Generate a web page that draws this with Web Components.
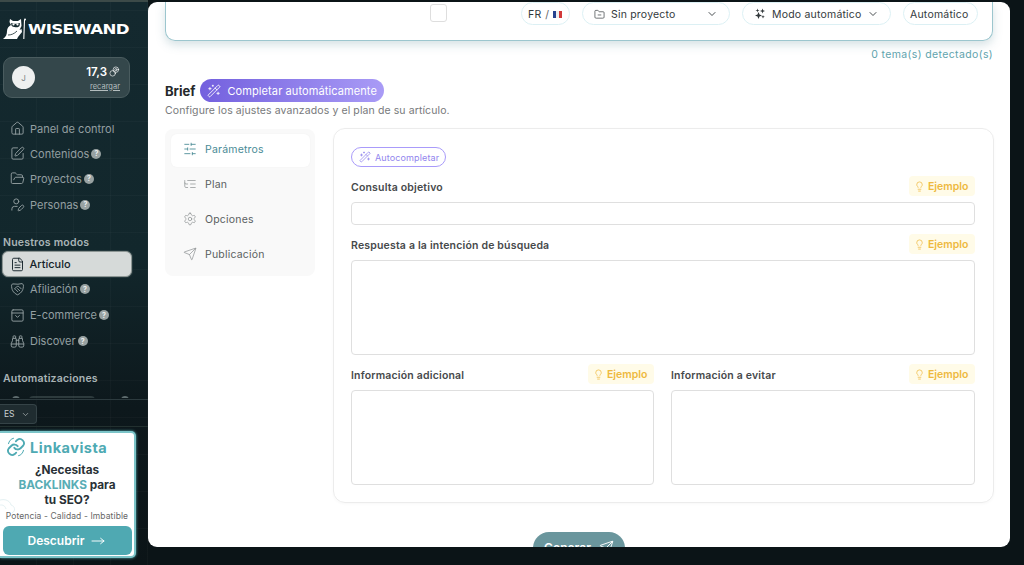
<!DOCTYPE html>
<html lang="es">
<head>
<meta charset="utf-8">
<title>Wisewand</title>
<style>
  html, body { margin: 0; height: 100%; overflow: hidden; background: #0b1417; }
  body { font-family: Inter, "Liberation Sans", sans-serif; }
  #app { display: flex; height: 565px; }
</style>
</head>
<body>
<div id="app">
  <wise-sidebar></wise-sidebar>
  <wise-main></wise-main>
</div>
<script>
const ICONS = {
  house: '<path d="M15 21v-8a1 1 0 0 0-1-1h-4a1 1 0 0 0-1 1v8"/><path d="M3 10a2 2 0 0 1 .709-1.528l7-5.999a2 2 0 0 1 2.582 0l7 5.999A2 2 0 0 1 21 10v9a2 2 0 0 1-2 2H5a2 2 0 0 1-2-2z"/>',
  pen: '<path d="M12 3H5a2 2 0 0 0-2 2v14a2 2 0 0 0 2 2h14a2 2 0 0 0 2-2v-7"/><path d="M18.375 2.625a1 1 0 0 1 3 3l-9.013 9.014a2 2 0 0 1-.853.505l-2.873.84a.5.5 0 0 1-.62-.62l.84-2.873a2 2 0 0 1 .506-.852z"/>',
  folderOpen: '<path d="m6 14 1.5-2.9A2 2 0 0 1 9.24 10H20a2 2 0 0 1 1.94 2.5l-1.54 6a2 2 0 0 1-1.95 1.5H4a2 2 0 0 1-2-2V5a2 2 0 0 1 2-2h3.9a2 2 0 0 1 1.69.9l.81 1.2a2 2 0 0 0 1.67.9H18a2 2 0 0 1 2 2v2"/>',
  userPen: '<path d="M11.5 15H7a4 4 0 0 0-4 4v2"/><path d="M21.378 16.626a1 1 0 0 0-3.004-3.004l-4.01 4.012a2 2 0 0 0-.506.854l-.837 2.87a.5.5 0 0 0 .62.62l2.87-.837a2 2 0 0 0 .854-.506z"/><circle cx="10" cy="7" r="4"/>',
  file: '<path d="M15 2H6a2 2 0 0 0-2 2v16a2 2 0 0 0 2 2h12a2 2 0 0 0 2-2V7Z"/><path d="M14 2v4a2 2 0 0 0 2 2h4"/><path d="M10 9H8"/><path d="M16 13H8"/><path d="M16 17H8"/>',
  shake: '<path d="M12 3.5 4 3 2.5 5c0 7 2 12 9.5 15.5C19.500 17 21.500 12 21.500 5L20 3z"/><path d="m7 11 4-3.500c1-.8 2.500-.8 3.500 0L18 11"/><path d="m9 12 3.500 3.500M12 10.500l3.500 3.500"/>',
  bag: '<path d="M5 3h14a2 2 0 0 1 2 2v14a2 2 0 0 1-2 2H5a2 2 0 0 1-2-2V5a2 2 0 0 1 2-2z"/><path d="M3 8h18"/><path d="m9 12 3 3 3-3"/>',
  binoculars: '<path d="M10 10h4"/><path d="M19 7V4a1 1 0 0 0-1-1h-2a1 1 0 0 0-1 1v3"/><path d="M20 21a2 2 0 0 0 2-2v-3.851c0-1.39-2-2.962-2-4.829V8a1 1 0 0 0-1-1h-4a1 1 0 0 0-1 1v11a2 2 0 0 0 2 2z"/><path d="M22 16H2"/><path d="M4 21a2 2 0 0 1-2-2v-3.851c0-1.39 2-2.962 2-4.829V8a1 1 0 0 1 1-1h4a1 1 0 0 1 1 1v11a2 2 0 0 1-2 2z"/><path d="M9 7V4a1 1 0 0 0-1-1H6a1 1 0 0 0-1 1v3"/>',
  sliders: '<path d="M21 4h-7M10 4H3M21 12h-9M8 12H3M21 20h-5M12 20H3M14 2v4M8 10v4M16 18v4"/>',
  tree: '<path d="M21 12h-8M21 6H8M21 18h-8M3 6v4c0 1.100.9 2 2 2h3M3 10v6c0 1.100.9 2 2 2h3"/>',
  gear: '<path d="M12.220 2h-.44a2 2 0 0 0-2 2v.18a2 2 0 0 1-1 1.730l-.43.25a2 2 0 0 1-2 0l-.15-.08a2 2 0 0 0-2.730.73l-.22.38a2 2 0 0 0 .73 2.730l.15.1a2 2 0 0 1 1 1.720v.51a2 2 0 0 1-1 1.740l-.15.09a2 2 0 0 0-.73 2.730l.22.38a2 2 0 0 0 2.730.73l.15-.08a2 2 0 0 1 2 0l.43.25a2 2 0 0 1 1 1.730V20a2 2 0 0 0 2 2h.44a2 2 0 0 0 2-2v-.18a2 2 0 0 1 1-1.730l.43-.25a2 2 0 0 1 2 0l.15.08a2 2 0 0 0 2.730-.73l.22-.39a2 2 0 0 0-.73-2.730l-.15-.08a2 2 0 0 1-1-1.740v-.5a2 2 0 0 1 1-1.740l.15-.09a2 2 0 0 0 .73-2.730l-.22-.38a2 2 0 0 0-2.730-.73l-.15.08a2 2 0 0 1-2 0l-.43-.25a2 2 0 0 1-1-1.730V4a2 2 0 0 0-2-2z"/><circle cx="12" cy="12" r="3"/>',
  send: '<path d="M14.536 21.686a.5.5 0 0 0 .937-.024l6.500-19a.496.496 0 0 0-.635-.635l-19 6.500a.5.5 0 0 0-.024.937l7.930 3.180a2 2 0 0 1 1.112 1.110z"/><path d="m21.854 2.147-10.940 10.939"/>',
  wand: '<path d="m21.640 3.640-1.280-1.280a1.210 1.210 0 0 0-1.720 0L2.360 18.640a1.210 1.210 0 0 0 0 1.720l1.280 1.280a1.200 1.200 0 0 0 1.720 0L21.640 5.360a1.200 1.200 0 0 0 0-1.720"/><path d="m14 7 3 3"/><path d="M5 6v4M19 14v4M10 2v2M7 8H3M21 16h-4M11 3H9"/>',
  bulb: '<path d="M15 14c.2-1 .7-1.700 1.500-2.500 1-.9 1.500-2.200 1.500-3.500A6 6 0 0 0 6 8c0 1 .2 2.200 1.500 3.500.7.7 1.300 1.500 1.500 2.500"/><path d="M9 18h6"/><path d="M10 22h4"/>',
  coins: '<circle cx="8" cy="16" r="6"/><circle cx="15" cy="8" r="6"/><circle cx="15" cy="8" r="2.500"/>',
  chevron: '<path d="m6 9 6 6 6-6"/>',
  folder: '<path d="M20 20a2 2 0 0 0 2-2V8a2 2 0 0 0-2-2h-7.900a2 2 0 0 1-1.690-.9L9.600 3.900A2 2 0 0 0 7.930 3H4a2 2 0 0 0-2 2v13a2 2 0 0 0 2 2Z"/><path d="M9 13h6"/>',
  sparks: '<path fill="currentColor" stroke="none" d="M9 8l2 5 5 2-5 2-2 5-2-5-5-2 5-2zM17 1l1.300 3.700L22 6l-3.700 1.300L17 11l-1.300-3.700L12 6l3.700-1.300zM18 14l1 2.500 2.500 1-2.500 1-1 2.500-1-2.500-2.500-1 2.500-1zM7 1l1 3 3 1-3 1-1 3-1-3-3-1 3-1z"/>',
  arrow: '<path d="M3 12h18"/><path d="m16 8 5 4-5 4"/>'
};

// every icon is a stroked 24x24 svg, size and colour come from the user of the tag
class WiseIcon extends HTMLElement {
  connectedCallback() {
    const size = this.getAttribute('size') || 16;
    const sw = this.getAttribute('sw') || 1.6;
    this.attachShadow({ mode: 'open' }).innerHTML = `
      <style>:host { display: inline-flex; flex: none; } svg { display: block; }</style>
      <svg width="${size}" height="${size}" viewBox="0 0 24 24" fill="none" stroke="currentColor" stroke-width="${sw}" stroke-linecap="round" stroke-linejoin="round">${ICONS[this.getAttribute('name')] || ''}</svg>`;
  }
}
customElements.define('wise-icon', WiseIcon);

class NavItem extends HTMLElement {
  connectedCallback() {
    const help = this.hasAttribute('help') ? '<span class="help">?</span>' : '';
    this.attachShadow({ mode: 'open' }).innerHTML = `
      <style>
        :host { display: flex; align-items: center; height: var(--h, 25px); margin: 0 0 0 2px; width: 130px; box-sizing: border-box; padding-left: 8px; gap: 5px; font-size: 11px; color: #939fa1; white-space: nowrap; }
        :host([active]) { background: #d6dad9; color: #14232a; border: 1.5px solid #8d9694; border-radius: 6px; padding-left: 6.500px; height: 26px; font-weight: 500; box-shadow: 0 0 0 1px #24383c; }
        .help { width: 10px; height: 10px; border-radius: 50%; background: #98a2a2; color: #eef0f0; font-size: 7px; font-weight: 700; display: flex; align-items: center; justify-content: center; margin-left: -3px; }
      </style>
      <wise-icon name="${this.getAttribute('icon')}" size="15" sw="1.500"></wise-icon><span><slot></slot></span>${help}`;
  }
}
customElements.define('nav-item', NavItem);

class WiseLogo extends HTMLElement {
  constructor() {
    super();
    this.attachShadow({ mode: 'open' }).innerHTML = `
      <style>
        :host { display: flex; align-items: center; height: 24px; padding-left: 2px; }
        span { color: #fff; font: 700 13.500px "DejaVu Sans", sans-serif; letter-spacing: -.5px; display: inline-block; transform: scaleX(1.23); transform-origin: left center; }
      </style>
      <svg width="26" height="24" viewBox="0 0 26 24">
        <path fill="#fff" d="M8 2 11 4h5l3-2 .5 7-2 4 2-1 .5 3-4 5-1 2H7l-6 0c3-2 4-5 4-8s2-5 4-6L7.500 5z"/>
        <path fill="#14292e" d="M9 6c2 1 7 1 9 0l-.5 3c-1 1.200-2.500 1.500-4 1.200C12 10 10 9.500 9.500 8.500z"/>
        <circle cx="11.500" cy="7.500" r="1.100" fill="#fff"/><circle cx="15.500" cy="7.500" r="1.100" fill="#fff"/>
        <path d="M6 18c3 0 6-1 9-4" stroke="#14292e" stroke-width=".8" fill="none"/>
        <path d="M22.500 3 21.800 22" stroke="#fff" stroke-width="1.100"/>
        <circle cx="23" cy="2.500" r="1" fill="#fff"/>
      </svg>
      <span>WISEWAND</span>`;
  }
}
customElements.define('wise-logo', WiseLogo);

class CreditCard extends HTMLElement {
  constructor() {
    super();
    this.attachShadow({ mode: 'open' }).innerHTML = `
      <style>
        :host { display: flex; align-items: center; justify-content: space-between; width: 127px; height: 41px; box-sizing: border-box; margin-left: 3px; padding: 0 9px 0 8px; border-radius: 9px; background: #34474b; border: 1px solid #4a5c5f; }
        .avatar { width: 23px; height: 23px; border-radius: 50%; background: #eef0f0; color: #7d8586; font-size: 8px; display: flex; align-items: center; justify-content: center; }
        .right { display: flex; flex-direction: column; align-items: flex-end; color: #fff; gap: 3px; }
        .top { display: flex; align-items: center; gap: 2px; font-size: 11.500px; font-weight: 600; }
        a { font-size: 7.500px; color: #b3bdbe; text-decoration: underline; }
      </style>
      <div class="avatar">J</div>
      <div class="right">
        <div class="top">17,3 <wise-icon name="coins" size="11" sw="1.400"></wise-icon></div>
        <a>recargar</a>
      </div>`;
  }
}
customElements.define('credit-card', CreditCard);

class PromoCard extends HTMLElement {
  constructor() {
    super();
    this.attachShadow({ mode: 'open' }).innerHTML = `
      <style>
        :host { display: flex; flex-direction: column; align-items: center; position: relative; width: 136px; height: 127px; box-sizing: border-box; background: #fff; border: 2px solid #7cc4c8; border-left: 0; border-radius: 0 5px 5px 0; color: #2a3136; box-shadow: 0 0 3px #58b3b8; }
        .brand { display: flex; align-items: center; gap: 3px; align-self: flex-start; margin: 4px 0 0 5px; color: #4eaab3; font: 700 14.500px Inter, sans-serif; letter-spacing: .5px; height: 20px; }
        .ask { font-size: 11.800px; font-weight: 700; line-height: 15px; text-align: center; margin-top: 6px; }
        b { color: #58adb5; font-weight: 700; }
        .tag { font-size: 8.500px; color: #666; margin-top: 3px; white-space: nowrap; letter-spacing: .1px; }
        .cta { width: 129px; height: 29px; margin-top: 5px; border-radius: 6px; background: #4fa9b2; color: #fff; display: flex; align-items: center; justify-content: center; gap: 6px; font-size: 12px; font-weight: 600; }
        .ghost { position: absolute; left: -2px; top: 64px; }
      </style>
      <svg class="ghost" width="20" height="22" viewBox="0 0 20 22" fill="none" stroke="#e4f1f3" stroke-width="1"><path d="M0 4c5-3 12-1 13 4 4 1 5 6 1 8"/><path d="M0 9c3-2 7-1 8 3"/></svg>
      <div class="brand">
        <svg width="22" height="20" viewBox="0 0 24 24" fill="none" stroke="currentColor" stroke-width="2.200" stroke-linecap="round" stroke-linejoin="round"><path d="M10 13a5 5 0 0 0 7.500.5l3-3a5 5 0 0 0-7-7l-1.700 1.700"/><path d="M14 11a5 5 0 0 0-7.500-.5l-3 3a5 5 0 0 0 7 7l1.700-1.700"/><path stroke-width="1.200" d="M3 8c.5-3 3-6 6-6.500M21 16c-.5 3-3 6-6 6.500"/></svg>
        Linkavista
      </div>
      <div class="ask">¿Necesitas<br><b>BACKLINKS</b> para<br>tu SEO?</div>
      <div class="tag">Potencia - Calidad - Imbatible</div>
      <div class="cta">Descubrir <wise-icon name="arrow" size="16" sw="1.400"></wise-icon></div>`;
  }
}
customElements.define('promo-card', PromoCard);

class WiseSidebar extends HTMLElement {
  constructor() {
    super();
    this.attachShadow({ mode: 'open' }).innerHTML = `
      <style>
        :host { display: block; width: 148px; flex: none; height: 565px; color: #fff; overflow: hidden;
          background:
            repeating-linear-gradient(90deg, transparent 0 36px, rgba(255,255,255,.022) 36px 37px),
            repeating-linear-gradient(0deg, transparent 0 36px, rgba(255,255,255,.022) 36px 37px),
            linear-gradient(180deg, #14292f 0%, #12272c 45%, #0d181c 72%, #0b1417 100%);
          border-top: 2px solid #3c4a48; box-sizing: border-box; }
        .scroll { height: 398px; overflow: hidden; padding-top: 15px; box-sizing: border-box; border-bottom: 1px solid #2c3a3e; }
        wise-logo { margin-bottom: 16px; }
        .nav { margin-top: 18px; }
        h4 { margin: 0; font-size: 10.500px; font-weight: 600; color: #a9b4b6; padding-left: 3px; height: 16px; line-height: 16px; letter-spacing: .2px; }
        .modes { margin-top: 18px; }
        .modes nav-item { --h: 26px; }
        .auto { margin-top: 17px; }
        /* next row of the menu, only its top edge shows above the language strip */
        .peek { display: flex; align-items: flex-start; height: 2px; overflow: hidden; margin-top: 9px; padding-left: 12px; gap: 9px; }
        .peek i { display: block; background: #5f6d6f; height: 8px; border-radius: 5px; }
        .lang-row { height: 27px; padding-top: 4px; border-bottom: 1px solid #22302f; box-sizing: border-box; }
        .lang { display: flex; align-items: center; gap: 6px; width: 37px; height: 20px; box-sizing: border-box; padding-left: 4px; background: #1f2c30; border: 1px solid #354347; border-left: 0; border-radius: 0 4px 4px 0; font-size: 8.500px; color: #c8cfd0; }
        promo-card { margin-top: 4px; }
      </style>
      <div class="scroll">
        <wise-logo></wise-logo>
        <credit-card></credit-card>
        <div class="nav">
          <nav-item icon="house">Panel de control</nav-item>
          <nav-item icon="pen" help>Contenidos</nav-item>
          <nav-item icon="folderOpen" help>Proyectos</nav-item>
          <nav-item icon="userPen" help style="margin-top:1px">Personas</nav-item>
        </div>
        <div class="modes">
          <h4>Nuestros modos</h4>
          <nav-item icon="file" active>Artículo</nav-item>
          <nav-item icon="shake" help style="margin-top:-1px">Afiliación</nav-item>
          <nav-item icon="bag" help>E-commerce</nav-item>
          <nav-item icon="binoculars" help>Discover</nav-item>
        </div>
        <div class="auto">
          <h4>Automatizaciones</h4>
          <div class="peek"><i style="width:8px"></i><i style="width:66px;opacity:.4"></i><i style="width:8px;margin-left:17px"></i></div>
        </div>
      </div>
      <div class="lang-row"><div class="lang">ES <wise-icon name="chevron" size="9"></wise-icon></div></div>
      <promo-card></promo-card>`;
  }
}
customElements.define('wise-sidebar', WiseSidebar);

class TopPill extends HTMLElement {
  connectedCallback() {
    const w = this.getAttribute('w');
    this.attachShadow({ mode: 'open' }).innerHTML = `
      <style>
        :host { display: flex; align-items: center; gap: 6px; box-sizing: border-box; width: ${w}px; height: 23px; padding: 1px var(--pad, 11px) 0; border: 1px solid #dcf0f4; border-radius: 12px; font-size: 10.500px; letter-spacing: .2px; color: #33393c; white-space: nowrap; }
      </style>
      <slot></slot>`;
  }
}
customElements.define('top-pill', TopPill);

class TopCard extends HTMLElement {
  constructor() {
    super();
    this.attachShadow({ mode: 'open' }).innerHTML = `
      <style>
        :host { display: flex; align-items: flex-start; height: 39px; box-sizing: border-box; border: 1px solid #9cc6ce; border-top: 0; border-radius: 0 0 10px 10px; box-shadow: 0 4px 10px rgba(90,140,150,.25); padding-right: 14px; }
        .check { width: 17px; height: 18px; box-sizing: border-box; margin: 2px 74px 0 264px; border: 1px solid #dedede; border-radius: 3px; }
        .pills { display: flex; gap: 12px; }
        .flag { display: flex; width: 9px; height: 7px; }
        .flag i { flex: 1; }
        .sep { color: #666; }
      </style>
      <div class="check"></div>
      <div class="pills">
        <top-pill w="49" style="gap:4px;--pad:6px">FR <span class="sep">/</span> <span class="flag"><i style="background:#26438f"></i><i style="background:#eee"></i><i style="background:#d23a3a"></i></span></top-pill>
        <top-pill w="148"><wise-icon name="folder" size="11" sw="1.500"></wise-icon><span style="flex:1">Sin proyecto</span><wise-icon name="chevron" size="12" sw="1.800"></wise-icon></top-pill>
        <top-pill w="149"><wise-icon name="sparks" size="12"></wise-icon><span style="flex:1;margin-right:-4px">Modo automático</span><wise-icon name="chevron" size="12" sw="1.800"></wise-icon></top-pill>
        <top-pill w="75" style="--pad:6px">Automático</top-pill>
      </div>`;
  }
}
customElements.define('top-card', TopCard);

class SideTabs extends HTMLElement {
  constructor() {
    super();
    const tabs = [['sliders', 'Parámetros'], ['tree', 'Plan'], ['gear', 'Opciones'], ['send', 'Publicación']];
    this.attachShadow({ mode: 'open' }).innerHTML = `
      <style>
        :host { display: block; flex: none; width: 150px; height: 147px; box-sizing: border-box; padding: 5px 5px 0 6px; background: #f9f9f9; border-radius: 8px; margin-top: 1px; }
        .tab { display: flex; align-items: center; gap: 8px; box-sizing: border-box; height: 33px; padding-bottom: 3px; margin-bottom: 2px; padding-left: 12px; font-size: 10.500px; color: #5b5f61; border-radius: 6px; letter-spacing: .2px; }
        .tab wise-icon { color: #8b8f90; }
        .on { background: #fff; color: #4a8b96; box-shadow: 0 0 2px rgba(0,0,0,.04); }
        .on wise-icon { color: #4a8b96; }
      </style>
      ${tabs.map((t, i) => `<div class="tab ${i ? '' : 'on'}"><wise-icon name="${t[0]}" size="14" sw="${i ? 1.2 : 1.5}"></wise-icon>${t[1]}</div>`).join('')}`;
  }
}
customElements.define('side-tabs', SideTabs);

// label + optional "Ejemplo" badge above a box, height of the box is the attribute
class BriefField extends HTMLElement {
  connectedCallback() {
    const box = this.getAttribute('box');
    const badge = this.hasAttribute('example')
      ? `<div class="badge"><wise-icon name="bulb" size="11" sw="1.600"></wise-icon>Ejemplo</div>` : '';
    this.attachShadow({ mode: 'open' }).innerHTML = `
      <style>
        :host { display: block; min-width: 0; }
        .head { display: flex; align-items: center; justify-content: space-between; height: 20px; margin-bottom: 6px; }
        label { font-size: 10.500px; font-weight: 600; color: #46494b; white-space: nowrap; padding-top: 2px; letter-spacing: .18px; }
        .badge { display: flex; align-items: center; gap: 3px; width: 66px; height: 20px; box-sizing: border-box; padding-left: 5px; background: #fffbe8; border-radius: 4px; color: #eeb93f; font-size: 10.500px; font-weight: 600; }
        .box { height: ${box}px; box-sizing: border-box; border: 1px solid #dfdfdf; border-radius: 4px; background: #fff; }
      </style>
      <div class="head"><label><slot></slot></label>${badge}</div>
      <div class="box"></div>`;
  }
}
customElements.define('brief-field', BriefField);

class BriefForm extends HTMLElement {
  constructor() {
    super();
    this.attachShadow({ mode: 'open' }).innerHTML = `
      <style>
        :host { display: block; flex: 1; height: 375px; box-sizing: border-box; padding: 18px 18px 0 17px; border: 1px solid #ececec; border-radius: 12px; box-shadow: 0 1px 3px rgba(0,0,0,.03); }
        .auto { display: inline-flex; align-items: center; gap: 4px; height: 20px; box-sizing: border-box; padding: 0 6px 0 7px; border: 1px solid #a99bfa; border-radius: 10px; color: #9285ee; font-size: 9px; letter-spacing: .13px; background: #fff; }
        .stack { display: flex; flex-direction: column; gap: 9px; margin-top: 9px; }
        .row { display: grid; grid-template-columns: 303px 304px; gap: 17px; }
      </style>
      <div class="auto"><wise-icon name="wand" size="12" sw="1.500"></wise-icon>Autocompletar</div>
      <div class="stack">
        <brief-field box="23" example>Consulta objetivo</brief-field>
        <brief-field box="95" example>Respuesta a la intención de búsqueda</brief-field>
        <div class="row">
          <brief-field box="95" example>Información adicional</brief-field>
          <brief-field box="95" example>Información a evitar</brief-field>
        </div>
      </div>`;
  }
}
customElements.define('brief-form', BriefForm);

class WiseMain extends HTMLElement {
  constructor() {
    super();
    this.attachShadow({ mode: 'open' }).innerHTML = `
      <style>
        :host { display: block; width: 862px; height: 545px; margin-top: 2px; flex: none; box-sizing: border-box; padding: 0 17px; background: #fff; border-radius: 9px; overflow: hidden; }
        .count { text-align: right; font-size: 10.500px; color: #5fa3ad; height: 14px; line-height: 14px; margin-top: 7px; letter-spacing: .37px; }
        .title { display: flex; align-items: center; gap: 5px; margin-top: 17px; height: 23px; }
        h2 { margin: 0; font-size: 13px; font-weight: 700; color: #25282a; }
        .magic { display: flex; align-items: center; gap: 6px; width: 184px; height: 23px; box-sizing: border-box; padding-left: 7px; border-radius: 12px; background: linear-gradient(90deg, #7360de, #a99bf6); color: #fff; font-size: 11px; letter-spacing: .1px; white-space: nowrap; }
        p { margin: 2px 0 0; font-size: 10.500px; line-height: 14px; color: #77797b; letter-spacing: .1px; }
        .cols { display: flex; gap: 18px; margin-top: 10px; align-items: flex-start; }
        .go { display: flex; align-items: center; justify-content: center; gap: 8px; width: 92px; height: 34px; margin: 29px auto 0; box-sizing: border-box; padding-bottom: 4px; border-radius: 16px; background: #6a969d; color: #fff; font-size: 12px; font-weight: 600; }
      </style>
      <top-card></top-card>
      <div class="count">0 tema(s) detectado(s)</div>
      <div class="title"><h2>Brief</h2><div class="magic"><wise-icon name="wand" size="14" sw="1.500"></wise-icon>Completar automáticamente</div></div>
      <p>Configure los ajustes avanzados y el plan de su artículo.</p>
      <div class="cols"><side-tabs></side-tabs><brief-form></brief-form></div>
      <div class="go">Generar <wise-icon name="send" size="15" sw="1.500"></wise-icon></div>`;
  }
}
customElements.define('wise-main', WiseMain);
</script>
</body>
</html>
